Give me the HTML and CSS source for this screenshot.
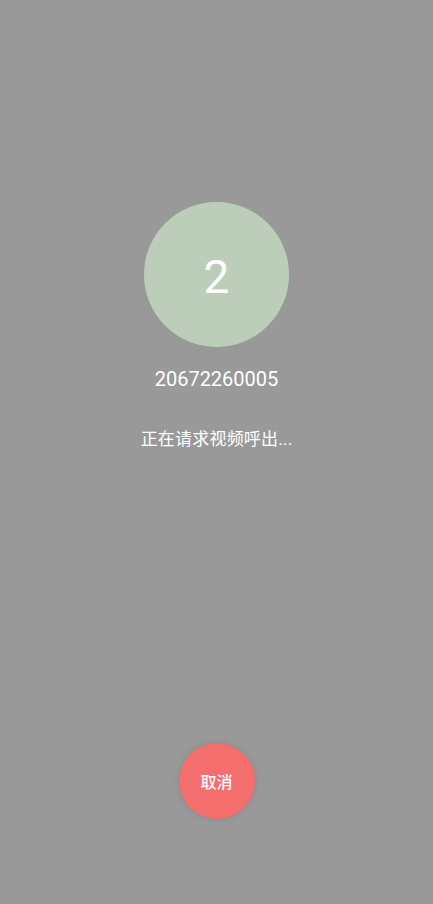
FILE: index.html
```html
<!DOCTYPE html>
<html lang="zh">
<head>
<meta charset="utf-8">
<link rel="stylesheet" href="styles.css">
</head>
<body>
<div class="screen">
  <div class="caller">
    <div class="avatar">2</div>
    <div class="number">20672260005</div>
    <div class="status">正在请求视频呼出...</div>
  </div>
  <div class="actions">
    <button class="cancel">取消</button>
  </div>
</div>
</body>
</html>
```
FILE: styles.css
```css
html, body {
  margin: 0;
  padding: 0;
  background: #999999;
}
.screen {
  width: 433px;
  height: 904px;
  display: flex;
  flex-direction: column;
  align-items: center;
  font-family: Roboto, "Noto Sans CJK SC", sans-serif;
  color: #ffffff;
}
.caller {
  display: flex;
  flex-direction: column;
  align-items: center;
  padding-top: 202px;
}
.avatar {
  width: 145px;
  height: 145px;
  border-radius: 50%;
  background: #bcceba;
  display: flex;
  align-items: center;
  justify-content: center;
  font-size: 46px;
  line-height: 1;
  padding-top: 4px;
  box-sizing: border-box;
}
.number {
  margin-top: 20px;
  font-size: 20px;
  line-height: 24px;
}
.status {
  margin-top: 36px;
  font-size: 17px;
  line-height: 24px;
  letter-spacing: 0.2px;
}
.actions {
  margin-top: auto;
  padding-bottom: 85px;
}
.cancel {
  width: 76px;
  height: 76px;
  border-radius: 50%;
  border: none;
  background: #f46e6e;
  color: #ffffff;
  font-family: "Noto Sans CJK SC", sans-serif;
  font-size: 16px;
  font-weight: 500;
  box-shadow: 0 0 6px rgba(0,0,0,0.12);
  padding: 0;
}
```
